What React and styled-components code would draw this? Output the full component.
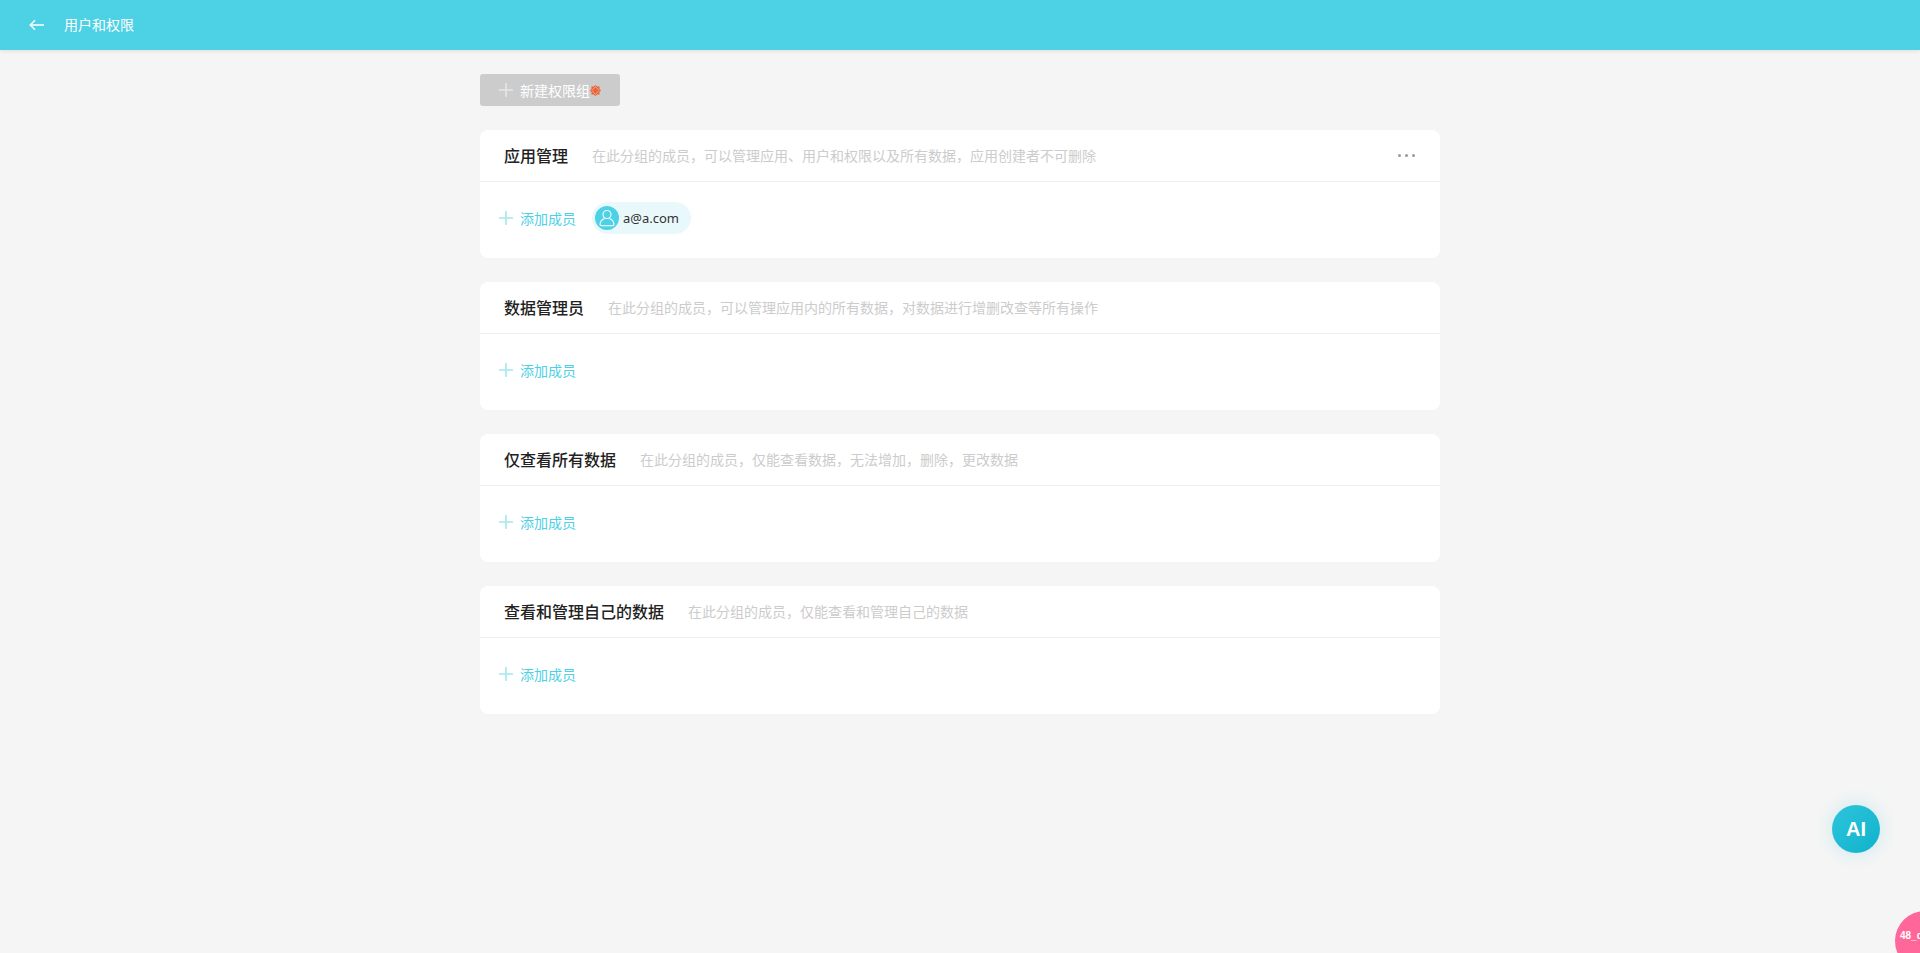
import React from 'react';
import styled, { createGlobalStyle } from 'styled-components';

const groups = [
  {
    title: '应用管理',
    desc: '在此分组的成员，可以管理应用、用户和权限以及所有数据，应用创建者不可删除',
    more: true,
    members: ['a@a.com'],
  },
  { title: '数据管理员', desc: '在此分组的成员，可以管理应用内的所有数据，对数据进行增删改查等所有操作' },
  { title: '仅查看所有数据', desc: '在此分组的成员，仅能查看数据，无法增加，删除，更改数据' },
  { title: '查看和管理自己的数据', desc: '在此分组的成员，仅能查看和管理自己的数据' },
];

const PlusIcon = ({ color }) => (
  <svg width="14" height="14" viewBox="0 0 14 14" fill="none">
    <path d="M7 0V14M0 7H14" stroke={color} strokeWidth="1.6" />
  </svg>
);

const App = () => (
  <Page>
    <GlobalStyle />
    <TopBar>
      <BackIcon width="16" height="12" viewBox="0 0 16 12" fill="none">
        <path d="M15 6H1.5M6 1.2L1.2 6L6 10.8" stroke="#fff" strokeWidth="1.4" />
      </BackIcon>
      <TopTitle>用户和权限</TopTitle>
    </TopBar>
    <Content>
      <NewButton>
        <PlusIcon color="#e6e6e6" />
        <span>新建权限组</span>
        <Flower width="11" height="11" viewBox="0 0 11 11">
          <path
            d="M5.5 0L7.2 1.6L9.6 1.4L9.4 3.8L11 5.5L9.4 7.2L9.6 9.6L7.2 9.4L5.5 11L3.8 9.4L1.4 9.6L1.6 7.2L0 5.5L1.6 3.8L1.4 1.4L3.8 1.6Z"
            fill="#e8633a"
          />
          <path d="M5.5 1.5L9 5.5L5.5 9.5L2 5.5Z" fill="none" stroke="#f4b8a0" strokeWidth="0.8" />
          <circle cx="5.5" cy="5.5" r="1" fill="#e8633a" />
        </Flower>
      </NewButton>
      {groups.map((group) => (
        <Card key={group.title}>
          <CardHeader>
            <CardTitle>{group.title}</CardTitle>
            <CardDesc>{group.desc}</CardDesc>
            {group.more && (
              <MoreDots>
                <i />
                <i />
                <i />
              </MoreDots>
            )}
          </CardHeader>
          <CardBody>
            <AddMember>
              <PlusIcon color="#a6e6f0" />
              <span>添加成员</span>
            </AddMember>
            {group.members &&
              group.members.map((member) => (
                <MemberChip key={member}>
                  <Avatar>
                    <svg width="16" height="18" viewBox="0 0 16 18" fill="none">
                      <circle cx="8" cy="5.5" r="4" stroke="#fff" strokeWidth="1.1" />
                      <path
                        d="M5.5 9.5C3 10.5 1.2 12.6 1 15.2C1 16.2 1.6 16.8 2.5 16.8H13.5C14.4 16.8 15 16.2 15 15.2C14.8 12.6 13 10.5 10.5 9.5"
                        stroke="#fff"
                        strokeWidth="1.1"
                      />
                    </svg>
                  </Avatar>
                  <MemberName>{member}</MemberName>
                </MemberChip>
              ))}
          </CardBody>
        </Card>
      ))}
    </Content>
    <AiButton>AI</AiButton>
    <DebugBadge>48_d</DebugBadge>
  </Page>
);

const GlobalStyle = createGlobalStyle`
  html, body {
    margin: 0;
    padding: 0;
    height: 100%;
    background: #f5f5f5;
    overflow: hidden;
  }
  body {
    font-family: "Noto Sans CJK SC", "Liberation Sans", sans-serif;
  }
`;

const Page = styled.div`
  width: 100%;
  height: 953px;
  position: relative;
  overflow: hidden;
  background: #f5f5f5;
`;

const TopBar = styled.header`
  height: 50px;
  display: flex;
  align-items: center;
  padding-left: 29px;
  background: #4dd1e5;
  box-shadow: 0 1px 4px rgba(0, 0, 0, 0.1);
`;

const BackIcon = styled.svg`
  margin-right: 19px;
`;

const TopTitle = styled.div`
  font-size: 14px;
  color: #fff;
  padding-bottom: 2px;
`;

const Content = styled.main`
  width: 960px;
  margin: 0 auto;
  padding-top: 24px;
  display: flex;
  flex-direction: column;
  align-items: stretch;
  gap: 24px;
`;

const NewButton = styled.div`
  width: 140px;
  height: 32px;
  box-sizing: border-box;
  display: flex;
  align-items: center;
  padding-left: 19px;
  gap: 7px;
  border-radius: 3px;
  background: #cccccc;
  color: #fff;
  font-size: 14px;
`;

const Flower = styled.svg`
  margin-left: -7px;
`;

const Card = styled.section`
  height: 128px;
  background: #fff;
  border-radius: 8px;
`;

const CardHeader = styled.div`
  height: 51px;
  display: flex;
  align-items: center;
  padding: 0 25px 0 24px;
  border-bottom: 1px solid #eeeeee;
`;

const CardTitle = styled.div`
  font-size: 16px;
  font-weight: 500;
  color: #222;
  margin: -2px 24px 0 0;
`;

const CardDesc = styled.div`
  font-size: 14px;
  color: #cccccc;
  margin-top: -2px;
`;

const MoreDots = styled.div`
  margin-left: auto;
  display: flex;
  gap: 4px;
  i {
    width: 3px;
    height: 3px;
    background: #999;
    border-radius: 50%;
  }
`;

const CardBody = styled.div`
  height: 72px;
  padding: 0 0 4px 19px;
  display: flex;
  align-items: center;
`;

const AddMember = styled.div`
  display: flex;
  align-items: center;
  gap: 7px;
  color: #4dd1e5;
  font-size: 14px;
`;

const MemberChip = styled.div`
  height: 32px;
  margin-left: 16px;
  padding: 0 12px 0 3px;
  display: flex;
  align-items: center;
  gap: 4px;
  border-radius: 16px;
  background: #e9f9fb;
`;

const Avatar = styled.div`
  width: 24px;
  height: 24px;
  border-radius: 50%;
  display: flex;
  align-items: center;
  justify-content: center;
  background: #4dd1e5;
`;

const MemberName = styled.div`
  font-family: "Noto Sans", sans-serif;
  font-size: 13px;
  color: #333;
`;

const AiButton = styled.div`
  position: absolute;
  left: 1832px;
  top: 805px;
  width: 48px;
  height: 48px;
  border-radius: 50%;
  display: flex;
  align-items: center;
  justify-content: center;
  color: #fff;
  font-family: "Liberation Sans", sans-serif;
  font-size: 20px;
  font-weight: 700;
  background: linear-gradient(135deg, #2ec4dc, #10b2cc);
  box-shadow: 0 0 20px rgba(30, 190, 215, 0.2);
`;

const DebugBadge = styled.div`
  position: absolute;
  left: 1895px;
  top: 911px;
  width: 60px;
  height: 60px;
  box-sizing: border-box;
  padding: 19px 0 0 5px;
  border-radius: 50%;
  background: #ff6699;
  color: #fff;
  font-family: "Liberation Sans", sans-serif;
  font-size: 10px;
  font-weight: 700;
`;

export default App;
